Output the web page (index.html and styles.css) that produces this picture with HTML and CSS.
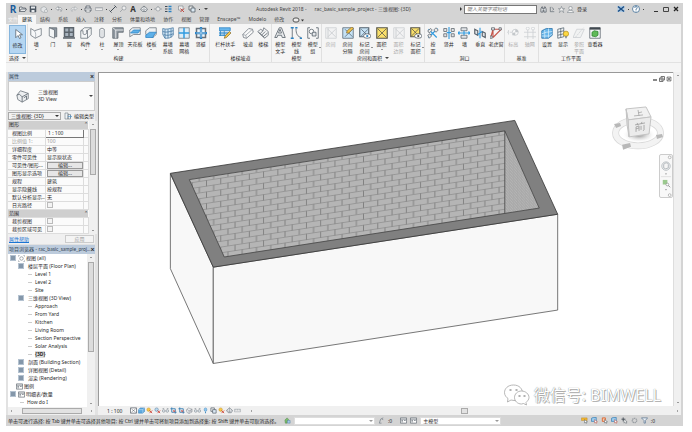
FILE: index.html
```html
<!DOCTYPE html>
<html lang="en">
<head>
<meta charset="utf-8">
<title>Autodesk Revit 2018</title>
<link rel="stylesheet" href="styles.css">
</head>
<body>
<svg class="defs" aria-hidden="true">
  <symbol id="cursor" viewBox="0 0 16 16"><path d="M5 2v11l3-3 2 4 2-1-2-4h4z" fill="#fff" stroke="#55606b"/></symbol>
  <symbol id="wall" viewBox="0 0 16 16"><path d="M1 2l5 3 9-3v9l-8 4-6-4z" fill="#f7f8f9" stroke="#687079"/><path d="M6 5c2 3 2 6 1 10" fill="none" stroke="#9aa2aa"/></symbol>
  <symbol id="door" viewBox="0 0 16 16"><path d="M3 1h10v12h-3V4L3 1z" fill="#8d969f" stroke="#5d656d"/><path d="M3 1l7 3v11l-7-3z" fill="#f3f5f6" stroke="#687079"/></symbol>
  <symbol id="window" viewBox="0 0 16 16"><path d="M2 1h12v12H2z" fill="#a9b4bf" stroke="#5d656d" stroke-width="2"/><path d="M8 1v12M2 7h12M0 14.500h16" stroke="#5d656d" stroke-width="2"/></symbol>
  <symbol id="part" viewBox="0 0 16 16"><path d="M1 5l5-4h9v9l-5 5H1z" fill="#f4f5f6" stroke="#687079"/><path d="M1 5h3v4c2 2 4 1 5-1V5l6-4M10 15V5H8" fill="none" stroke="#687079"/></symbol>
  <symbol id="column" viewBox="0 0 16 16"><path d="M5 3q3-3 6 0v10q-3 3-6 0z" fill="#f6f7f8" stroke="#687079"/><path d="M8 4v11" stroke="#b9bec3"/></symbol>
  <symbol id="roof" viewBox="0 0 16 16"><path d="M1 1h14v6H8v8H1z" fill="#8f979f" stroke="#5d656d"/><path d="M1 1l4 3v11M5 4h10" fill="none" stroke="#fff"/></symbol>
  <symbol id="ceil" viewBox="0 0 16 16"><path d="M1 13V4l4-3h10v9h-9z" fill="#eef1f3" stroke="#687079"/><path d="M2 8l4-4h9l-3 4z" fill="#5eb0e8" stroke="#2c83c4"/></symbol>
  <symbol id="floor" viewBox="0 0 16 16"><path d="M1 10V5l5-4h9v9l-5 4z" fill="#eef1f3" stroke="#687079"/><path d="M1 11l5-4h9l-4 5v2H1z" fill="#5eb0e8" stroke="#2c83c4"/></symbol>
  <symbol id="curtain" viewBox="0 0 16 16"><path d="M1 2c5 2 9 0 14-1v10c-4 4-6 4-11 4L1 10z" fill="#d5e9f7" stroke="#40739d"/><path d="M4 3v12M8 3v12M12 2v12M1 6c5 2 9 0 14-1M2 10c5 2 8 1 13-1" fill="none" stroke="#40739d"/></symbol>
  <symbol id="grid" viewBox="0 0 16 16"><path d="M1 1h14v14H1z" fill="#dcecf7" stroke="#687079"/><path d="M8 1v14M1 8h14" stroke="#319be0" stroke-width="2"/></symbol>
  <symbol id="mullion" viewBox="0 0 16 16"><path d="M2 2h12v12H2z" fill="#eff6fb" stroke="#687079" stroke-width="2"/><path d="M8 0v16M0 8h16" stroke="#2c83c4" stroke-width="3"/><path d="M8 2v12M2 8h12" stroke="#c8e2f5"/></symbol>
  <symbol id="rail" viewBox="0 0 16 16"><path d="M0 1h15v4H0z" fill="#67b6ec" stroke="#2c83c4"/><path d="M0 8h13M0 11h9" stroke="#4c9bd4" stroke-width="2"/><path d="M2 5v7M7 5v7" stroke="#2c83c4"/><path d="M7 15l1-3 6-6 2 2-6 6z" fill="#f3c64e" stroke="#8c7338"/></symbol>
  <symbol id="ramp" viewBox="0 0 16 16"><path d="M1 10L9 2l5 1 1 4-9 8-4-1z" fill="#fafafa" stroke="#687079"/><path d="M1 10l4 1 9-8M5 11l1 4" fill="none" stroke="#8f979f"/></symbol>
  <symbol id="stair" viewBox="0 0 16 16"><path d="M1 6l4-3 3 2 1-4 6 5v5l-5 4z" fill="#f0f1f2" stroke="#687079"/><path d="M4 9l4-4M6 11l5-5M8 13l6-5M2 7l8 7" stroke="#59616a"/></symbol>
  <symbol id="mtext" viewBox="0 0 16 16"><path d="M1 14L7 1h3l5 13h-4l-1-3H5l-1 3z" fill="#e8eaec" stroke="#4e5862"/><path d="M6 8l2-5 2 5z" fill="#fff" stroke="#4e5862"/></symbol>
  <symbol id="mline" viewBox="0 0 16 16"><path d="M3 1v14M8 2c0 7 2 11 7 12" fill="none" stroke="#4e5862"/><path d="M1 1h4M1 15h4M7 1h3M13 15h3" stroke="#2c83c4" stroke-width="2"/></symbol>
  <symbol id="mgroup" viewBox="0 0 16 16"><path d="M4 1H1v14h3M12 1h3v14h-3" fill="none" stroke="#4e5862"/><circle cx="6" cy="6" r="3" fill="#fff" stroke="#4e5862"/><path d="M7 7h5v5H7z" fill="#e4e7ea" stroke="#4e5862"/></symbol>
  <symbol id="room" viewBox="0 0 16 16"><path d="M1 1h14v14H1z" fill="#eef0f1" stroke="#8a9299"/><path d="M4 3l10 10M14 3L4 13M4 1v14" stroke="#7b848c"/></symbol>
  <symbol id="roomsep" viewBox="0 0 16 16"><path d="M1 1h14v14H1z" fill="#c6e2f5" stroke="#50606d"/><path d="M4 3l10 10M14 3L4 13" stroke="#50606d"/><path d="M6 8l1-3 6-5 2 2-6 6z" fill="#f3c64e" stroke="#8c7338"/></symbol>
  <symbol id="roomtag" viewBox="0 0 16 16"><path d="M1 1h12v12H1z" fill="#c6e2f5" stroke="#50606d" stroke-width="1.500"/><path d="M3 3l9 9M12 3l-9 9" stroke="#50606d"/><ellipse cx="11" cy="12" rx="5" ry="3" fill="#fff" stroke="#4e5862"/><circle cx="11" cy="12" r="1.500" fill="#2c83c4"/></symbol>
  <symbol id="area" viewBox="0 0 16 16"><path d="M1 1h14v14H1z" fill="#fae06a" stroke="#57564c" stroke-width="1.500"/><path d="M2 2l12 12M14 2L2 14" stroke="#57564c"/></symbol>
  <symbol id="areatag" viewBox="0 0 16 16"><path d="M1 1h12v12H1z" fill="#fae06a" stroke="#57564c" stroke-width="1.500"/><path d="M2 2l10 10M12 2L2 12" stroke="#57564c"/><ellipse cx="11" cy="12" rx="5" ry="3" fill="#fff" stroke="#4e5862"/><circle cx="11" cy="12" r="1.500" fill="#444"/></symbol>
  <symbol id="byface" viewBox="0 0 16 16"><path d="M2 3l11 11M2 14L14 2" stroke="#319be0" stroke-width="1.500"/><path d="M1 5l4-3 2 2-4 4zM9 4l3-3 3 3-3 3zM1 11l3-2 2 3-3 3z" fill="#e8eaec" stroke="#59616a"/></symbol>
  <symbol id="shaft" viewBox="0 0 16 16"><path d="M1 2h4v4H1zM1 9h4v4H1zM11 2h4v4h-4zM11 9h4v4h-4z" fill="#e2e5e8" stroke="#59616a"/><path d="M8 0v16M5 7.500h6" stroke="#319be0" stroke-width="1.500"/></symbol>
  <symbol id="wallop" viewBox="0 0 16 16"><path d="M4 1h8v4H4zM4 11h8v4H4z" fill="#e2e5e8" stroke="#59616a"/><path d="M0 8h16M8 5v6M2 6L0 8l2 2M14 6l2 2-2 2" fill="none" stroke="#319be0" stroke-width="1.500"/></symbol>
  <symbol id="vert" viewBox="0 0 16 16"><path d="M1 3l4 2v6L1 9zM11 6l4 2v6l-4-2z" fill="#e2e5e8" stroke="#59616a" stroke-width="1.500"/><path d="M8 1v14M5 10l6-4" stroke="#319be0" stroke-width="1.500"/></symbol>
  <symbol id="dormer" viewBox="0 0 16 16"><path d="M1 14L4 3h11L4 14M4 3v11" fill="none" stroke="#c5564b" stroke-width="1.500"/><path d="M0 12h3v3H0zM2 1h4v3H2zM12 1h3v3h-3z" fill="#e8eaec" stroke="#59616a"/></symbol>
  <symbol id="level" viewBox="0 0 16 16"><path d="M0 7h9M2 4v6" stroke="#8b949c" stroke-dasharray="3 1"/><circle cx="11" cy="7" r="4" fill="#fff" stroke="#7b848c"/><path d="M11 3v8H7q0-4 4-4h4q0-4-4-4" fill="#7b848c"/></symbol>
  <symbol id="axes" viewBox="0 0 16 16"><path d="M5 4v12M12 4v12M0 7h16M0 13h16" stroke="#8b949c"/><circle cx="5" cy="2" r="2" fill="#fff" stroke="#8b949c"/><circle cx="12" cy="2" r="2" fill="#fff" stroke="#8b949c"/></symbol>
  <symbol id="set" viewBox="0 0 16 16"><path d="M1 5l6-3h8v9l-5 4H1z" fill="#66b5ea" stroke="#276fa5"/><path d="M1 9l6-2 8-1M5 4v11M10 2v12M1 12h10l4-3" fill="none" stroke="#d7edfb"/></symbol>
  <symbol id="show" viewBox="0 0 16 16"><path d="M1 3l8-2v12l-8 2z" fill="#f4f6f7" stroke="#50606d"/><path d="M1 7l8-2M1 11l8-2M5 2v12" stroke="#50606d"/><circle cx="12" cy="9" r="3.500" fill="#fdd842" stroke="#b59320"/><path d="M11 12h2v3h-2z" fill="#7b848c"/></symbol>
  <symbol id="refp" viewBox="0 0 16 16"><path d="M5 3h10l-5 11H0z" fill="#edeff0" stroke="#8b949c"/><path d="M3 14L14 1" stroke="#8b949c" stroke-dasharray="3 1"/></symbol>
  <symbol id="viewer" viewBox="0 0 16 16"><path d="M1 1h14v14H1z" fill="#f4f6f7" stroke="#5a636b"/><path d="M1 2h14" stroke="#40484f" stroke-width="3"/><path d="M4 7l3-2 5 1v5l-3 2-5-1z" fill="#60ba58" stroke="#2f8430"/></symbol>

  <symbol id="open" viewBox="0 0 16 16"><path d="M1 13V4h5l1 2h6v2M1 13l3-5h11l-3 5z" fill="#e8eaec" stroke="#515a63" stroke-width="1.500"/></symbol>
  <symbol id="save" viewBox="0 0 16 16"><path d="M2 2h11l1 1v11H2z" fill="#4e5965" stroke="#414b55"/><path d="M4 3h8v4H4zM5 10h6v4H5z" fill="#e6e9ec"/></symbol>
  <symbol id="sync" viewBox="0 0 16 16"><path d="M2 6l6-3 5 3v6l-5 3-6-3z" fill="#e3e5e7" stroke="#8d9499"/><circle cx="12" cy="12" r="3" fill="#eee" stroke="#8d9499"/></symbol>
  <symbol id="undo" viewBox="0 0 16 16"><path d="M6 3L2 7l4 4V8c4-1 6 1 6 5 4-5 1-9-6-8z" fill="#f5f6f7" stroke="#6b737b"/></symbol>
  <symbol id="redo" viewBox="0 0 16 16"><path d="M10 3l4 4-4 4V8c-4-1-6 1-6 5C0 8 3 4 10 5z" fill="#e8e9ea" stroke="#999fa4"/></symbol>
  <symbol id="print" viewBox="0 0 16 16"><path d="M4 6V2h8v4M2 6h12v6H2z" fill="#eceef0" stroke="#515a63" stroke-width="1.500"/><path d="M4 10h8v4H4z" fill="#fff" stroke="#515a63"/></symbol>
  <symbol id="measure" viewBox="0 0 16 16"><path d="M1 5h14v6H1z" fill="#eee" stroke="#848b92"/><path d="M4 5v3M8 5v3M12 5v3" stroke="#848b92"/></symbol>
  <symbol id="dim" viewBox="0 0 16 16"><path d="M2 14L14 2M1 11l4 4M11 1l4 4" stroke="#444d56" stroke-width="2"/></symbol>
  <symbol id="tag" viewBox="0 0 16 16"><circle cx="10" cy="6" r="4" fill="#eee" stroke="#777f87"/><path d="M7 9l-5 5" stroke="#777f87"/></symbol>
  <symbol id="home" viewBox="0 0 16 16"><path d="M1 8l7-6 7 6-3 5H5z" fill="#eef0f1" stroke="#68717a" stroke-width="1.500"/><path d="M8 2v9M3 8l5 3 5-3" fill="none" stroke="#68717a"/></symbol>
  <symbol id="sect" viewBox="0 0 16 16"><circle cx="8" cy="8" r="4" fill="#eee" stroke="#777f87"/><path d="M0 8h4M12 8h4M8 2v2" stroke="#777f87"/></symbol>
  <symbol id="thin" viewBox="0 0 16 16"><path d="M2 3h5M2 8h5M2 13h5" stroke="#444d56" stroke-width="2"/><path d="M9 3h6M9 8h6M9 13h6" stroke="#2c83c4" stroke-width="3"/></symbol>
  <symbol id="closew" viewBox="0 0 16 16"><path d="M3 2h9v8H3z" fill="#eee" stroke="#666e76"/><path d="M7 7l7 7M14 7l-7 7" stroke="#c14a42" stroke-width="2"/></symbol>
  <symbol id="switch" viewBox="0 0 16 16"><path d="M2 2h8v8H2z" fill="#eee" stroke="#4e5862" stroke-width="1.500"/><path d="M6 6h8v8H6z" fill="#dce9f3" stroke="#4e5862" stroke-width="1.500"/></symbol>
  <symbol id="bino" viewBox="0 0 16 16"><path d="M2 7l2-5h2v4h4V2h2l2 5v7H9V9H7v5H2z" fill="#dfe2e5" stroke="#444d56" stroke-width="1.500"/></symbol>
  <symbol id="comm" viewBox="0 0 16 16"><path d="M3 2v11h9M6 3l5 4-3 3" fill="none" stroke="#56606a" stroke-width="1.500"/></symbol>
  <symbol id="star" viewBox="0 0 16 16"><path d="M8 1l2 5h5l-4 3 2 6-5-4-5 4 2-6-4-3h5z" fill="#f4f4f4" stroke="#56606a"/></symbol>
  <symbol id="user" viewBox="0 0 16 16"><circle cx="8" cy="5" r="4" fill="#f4f4f4" stroke="#56606a"/><path d="M1 15q1-6 7-5 6-1 7 5z" fill="#f4f4f4" stroke="#56606a"/></symbol>
  <symbol id="xchg" viewBox="0 0 16 16"><path d="M1 2h14v12H1z" fill="#aecbe5"/><path d="M2 3l12 10M14 3L2 13" stroke="#1d4f85" stroke-width="3"/></symbol>
  <symbol id="help" viewBox="0 0 16 16"><circle cx="8" cy="8" r="7" fill="#fff" stroke="#35658f" stroke-width="1.500"/><path d="M5.500 6q0-3 2.500-3t2.500 2.500Q10 8 8 8v2M8 11v2" fill="none" stroke="#35658f" stroke-width="1.500"/></symbol>
  <symbol id="house" viewBox="0 0 16 16"><path d="M1 7l4-5 9 3v6l-7 4-5-3z" fill="#eceef0" stroke="#777f87"/><path d="M1 7l3-1 3 3 7-4M7 9v6M9 10l3-2v4" fill="none" stroke="#646d76"/></symbol>
  <symbol id="edittype" viewBox="0 0 16 16"><path d="M2 2h6v12H2zM8 5h5v9H8z" fill="#edf2f6" stroke="#56606a"/><path d="M8 9h7M12 6l3 3-3 3" fill="none" stroke="#2c83c4"/></symbol>
  <symbol id="views" viewBox="0 0 16 16"><path d="M4 1H1v3M12 1h3v3M4 15H1v-3M12 15h3v-3" fill="none" stroke="#6a737b"/><circle cx="8" cy="8" r="4" fill="#fff" stroke="#444d56"/></symbol>
  <symbol id="sheet" viewBox="0 0 16 16"><path d="M1 2h14v12H1z" fill="#fff" stroke="#5a636c" stroke-width="1.500"/><path d="M1 5h14M3 8h4M3 11h4M9 8h4" stroke="#5a636c" stroke-width="1.500"/></symbol>
  <symbol id="scalebox" viewBox="0 0 16 16"><path d="M1 2h14v12H1z" fill="#fff" stroke="#444d56" stroke-width="1.500"/><path d="M3 4l10 8M13 4L3 12" stroke="#444d56"/></symbol>
  <symbol id="bluebox" viewBox="0 0 16 16"><path d="M1 6l4-4h10v8l-4 4H1z" fill="#5ea9df" stroke="#2b75b0"/><path d="M1 6h10l4-4M11 6v8" fill="none" stroke="#dceefa"/></symbol>
  <symbol id="sun" viewBox="0 0 16 16"><circle cx="6" cy="6" r="4" fill="#f9c94a" stroke="#bd8b22"/><path d="M8 8l6 6M14 8l-6 6" stroke="#cf4338" stroke-width="2"/></symbol>
  <symbol id="shadow" viewBox="0 0 16 16"><circle cx="6" cy="6" r="4" fill="#b7d8ef" stroke="#426d90"/><path d="M8 8l6 6M14 8l-6 6" stroke="#cf4338" stroke-width="2"/></symbol>
  <symbol id="crop" viewBox="0 0 16 16"><path d="M4 1v11h11M1 4h11v11" fill="none" stroke="#357bb2" stroke-width="2"/><path d="M7 7l5 5M12 7l-5 5" stroke="#cf4338" stroke-width="1.500"/></symbol>
  <symbol id="glasses" viewBox="0 0 16 16"><path d="M1 4l4-1M11 3l4 1" stroke="#56606a"/><circle cx="4" cy="9" r="3" fill="#e6edf2" stroke="#56606a"/><circle cx="12" cy="9" r="3" fill="#e6edf2" stroke="#56606a"/></symbol>
  <symbol id="bulb" viewBox="0 0 16 16"><ellipse cx="8" cy="6" rx="3" ry="4" fill="#8ec8f2" stroke="#337fb8"/><path d="M7 11h2v3H7z" fill="#337fb8"/></symbol>
  <symbol id="green" viewBox="0 0 16 16"><path d="M2 7l5-5 4 4-4 3v5H3z" fill="#7bbd6e" stroke="#447b45"/><path d="M8 8h6v6H8z" fill="#a2c9e5" stroke="#43779f"/></symbol>
  <symbol id="pick" viewBox="0 0 16 16"><path d="M1 2h13v6H1z" fill="#f3b62e" stroke="#b5852a"/><path d="M8 6v8l2-2 2 3 1-1-1-3h3z" fill="#fff" stroke="#444d56"/></symbol>
  <symbol id="pickred" viewBox="0 0 16 16"><path d="M3 2h7v8H3z" fill="#fac9a7" stroke="#d9622f" stroke-width="2"/><path d="M8 6v8l2-2 2 3 1-1-1-3h3z" fill="#fff" stroke="#444d56"/></symbol>
  <symbol id="pickblue" viewBox="0 0 16 16"><path d="M1 3l4-2h7v9H1z" fill="#9acbed" stroke="#2b75b0" stroke-width="1.500"/><path d="M8 6v8l2-2 2 3 1-1-1-3h3z" fill="#fff" stroke="#b4453a"/></symbol>
  <symbol id="pickdrag" viewBox="0 0 16 16"><path d="M5 1v9M1 5h9" stroke="#444d56" stroke-width="2"/><path d="M7 5v9l2-2 2 3 2-1-2-3h3z" fill="#fff" stroke="#444d56"/></symbol>
  <symbol id="gear" viewBox="0 0 16 16"><circle cx="8" cy="8" r="5" fill="#d4d4d4" stroke="#9a9fa4" stroke-width="3" stroke-dasharray="3 1"/></symbol>
  <symbol id="filter" viewBox="0 0 16 16"><path d="M1 2h14L10 8v6H7V8z" fill="#edf2f7" stroke="#4d6b89" stroke-width="1.500"/></symbol>
  <symbol id="editable" viewBox="0 0 16 16"><path d="M3 14L6 5l6-3M3 14h5M9 4l3 3" fill="none" stroke="#848b92" stroke-width="2"/></symbol>
</svg>

<main class="app">
  <header class="titlebar">
    <div class="qat">
      <button class="ico logo" aria-label="Revit">R</button>
      <button class="ico" aria-label="打开"><svg><use href="#open"/></svg></button>
      <button class="ico" aria-label="保存"><svg><use href="#save"/></svg></button>
      <button class="ico drop" aria-label="同步"><svg><use href="#sync"/></svg></button>
      <button class="ico drop" aria-label="放弃"><svg><use href="#undo"/></svg></button>
      <button class="ico drop" aria-label="重做"><svg><use href="#redo"/></svg></button>
      <button class="ico" aria-label="打印"><svg><use href="#print"/></svg></button>
      <button class="ico drop" aria-label="测量"><svg><use href="#measure"/></svg></button>
      <button class="ico" aria-label="尺寸标注"><svg><use href="#dim"/></svg></button>
      <button class="ico" aria-label="标记"><svg><use href="#tag"/></svg></button>
      <button class="ico letter" aria-label="文字">A</button>
      <button class="ico drop" aria-label="三维视图"><svg><use href="#home"/></svg></button>
      <button class="ico" aria-label="剖面"><svg><use href="#sect"/></svg></button>
      <button class="ico" aria-label="细线"><svg><use href="#thin"/></svg></button>
      <button class="ico gap" aria-label="关闭隐藏窗口"><svg><use href="#closew"/></svg></button>
      <button class="ico drop" aria-label="切换窗口"><svg><use href="#switch"/></svg></button>
      <button class="ico caret" aria-label="自定义"></button>
    </div>
    <h1 class="doc-title"><span>Autodesk Revit 2018 -</span><span>rac_basic_sample_project - 三维视图: {3D}</span></h1>
    <div class="info">
      <span class="tri-right"></span>
      <input class="search" type="text" aria-label="搜索" placeholder="键入关键字或短语">
      <button class="ico" aria-label="搜索"><svg><use href="#bino"/></svg></button>
      <button class="ico" aria-label="通讯中心"><svg><use href="#comm"/></svg></button>
      <button class="ico" aria-label="收藏夹"><svg><use href="#star"/></svg></button>
      <button class="ico" aria-label="用户"><svg><use href="#user"/></svg></button>
      <button class="login">登录</button>
    </div>
    <div class="win">
      <button class="ico drop" aria-label="Exchange"><svg><use href="#xchg"/></svg></button>
      <button class="ico drop" aria-label="帮助"><svg><use href="#help"/></svg></button>
      <button class="wbtn first" aria-label="最小化"><svg viewBox="0 0 8 8"><path d="M2 6.500h4" stroke="#333"/></svg></button>
      <button class="wbtn" aria-label="最大化"><svg viewBox="0 0 8 8"><path d="M1.500 2.500h5v4h-5z" fill="none" stroke="#444"/></svg></button>
      <button class="wbtn" aria-label="关闭"><svg viewBox="0 0 8 8"><path d="M2 2l4 4M6 2L2 6" stroke="#222" stroke-width="1.300"/></svg></button>
    </div>
  </header>

  <nav class="tabs">
    <button class="tab file">文件</button><button class="tab active">建筑</button><button class="tab">结构</button><button class="tab">系统</button><button class="tab">插入</button><button class="tab">注释</button><button class="tab">分析</button><button class="tab">体量和场地</button><button class="tab">协作</button><button class="tab">视图</button><button class="tab">管理</button><button class="tab">Enscape™</button><button class="tab">Modelo</button><button class="tab">修改</button><button class="tab more" aria-label="显示选项"><svg viewBox="0 0 12 6"><rect x="1" y="1" width="6" height="4" rx="2" fill="#eee" stroke="#555"/><path d="M9 2.500h3l-1.500 2z" fill="#333"/></svg></button>
  </nav>

  <section class="ribbon">
    <div class="panel p-select"><div class="tools"><button class="tool on"><svg><use href="#cursor"/></svg><span>修改</span></button></div><div class="cap menu">选择</div></div>
    <div class="panel p-build"><div class="tools">
      <button class="tool more"><svg><use href="#wall"/></svg><span>墙</span></button>
      <button class="tool"><svg><use href="#door"/></svg><span>门</span></button>
      <button class="tool"><svg><use href="#window"/></svg><span>窗</span></button>
      <button class="tool more"><svg><use href="#part"/></svg><span>构件</span></button>
      <button class="tool more"><svg><use href="#column"/></svg><span>柱</span></button>
      <button class="tool more"><svg><use href="#roof"/></svg><span>屋顶</span></button>
      <button class="tool"><svg><use href="#ceil"/></svg><span>天花板</span></button>
      <button class="tool more"><svg><use href="#floor"/></svg><span>楼板</span></button>
      <button class="tool"><svg><use href="#curtain"/></svg><span>幕墙<br>系统</span></button>
      <button class="tool"><svg><use href="#grid"/></svg><span>幕墙<br>网格</span></button>
      <button class="tool"><svg><use href="#mullion"/></svg><span>竖梃</span></button>
    </div><div class="cap">构建</div></div>
    <div class="panel p-stair"><div class="tools">
      <button class="tool wide more"><svg><use href="#rail"/></svg><span>栏杆扶手</span></button>
      <button class="tool"><svg><use href="#ramp"/></svg><span>坡道</span></button>
      <button class="tool"><svg><use href="#stair"/></svg><span>楼梯</span></button>
    </div><div class="cap">楼梯坡道</div></div>
    <div class="panel p-model"><div class="tools">
      <button class="tool"><svg><use href="#mtext"/></svg><span>模型<br>文字</span></button>
      <button class="tool"><svg><use href="#mline"/></svg><span>模型<br>线</span></button>
      <button class="tool side"><svg><use href="#mgroup"/></svg><span>模型<br>组</span></button>
    </div><div class="cap">模型</div></div>
    <div class="panel p-room"><div class="tools">
      <button class="tool" disabled><svg><use href="#room"/></svg><span>房间</span></button>
      <button class="tool"><svg><use href="#roomsep"/></svg><span>房间<br>分隔</span></button>
      <button class="tool side"><svg><use href="#roomtag"/></svg><span>标记<br>房间</span></button>
      <button class="tool more"><svg><use href="#area"/></svg><span>面积</span></button>
      <button class="tool" disabled><svg><use href="#room"/></svg><span>面积<br>边界</span></button>
      <button class="tool side"><svg><use href="#areatag"/></svg><span>标记<br>面积</span></button>
    </div><div class="cap menu">房间和面积</div></div>
    <div class="panel p-open"><div class="tools">
      <button class="tool"><svg><use href="#byface"/></svg><span>按<br>面</span></button>
      <button class="tool"><svg><use href="#shaft"/></svg><span>竖井</span></button>
      <button class="tool"><svg><use href="#wallop"/></svg><span>墙</span></button>
      <button class="tool"><svg><use href="#vert"/></svg><span>垂直</span></button>
      <button class="tool"><svg><use href="#dormer"/></svg><span>老虎窗</span></button>
    </div><div class="cap">洞口</div></div>
    <div class="panel p-datum"><div class="tools">
      <button class="tool" disabled><svg><use href="#level"/></svg><span>标高</span></button>
      <button class="tool" disabled><svg><use href="#axes"/></svg><span>轴网</span></button>
    </div><div class="cap">基准</div></div>
    <div class="panel p-plane"><div class="tools">
      <button class="tool"><svg><use href="#set"/></svg><span>设置</span></button>
      <button class="tool"><svg><use href="#show"/></svg><span>显示</span></button>
      <button class="tool" disabled><svg><use href="#refp"/></svg><span>参照<br>平面</span></button>
      <button class="tool"><svg><use href="#viewer"/></svg><span>查看器</span></button>
    </div><div class="cap">工作平面</div></div>
  </section>
  <div class="options"></div>

  <div class="work">
    <aside class="side-col">
      <section class="props">
        <h2 class="ptitle">属性<button class="px" aria-label="关闭属性">×</button></h2>
        <div class="type"><svg><use href="#house"/></svg><p>三维视图<br>3D View</p><span class="tri-down"></span></div>
        <div class="inst">
          <label class="pick"><select aria-label="实例"><option>三维视图: {3D}</option></select></label>
          <button class="edit-type"><svg><use href="#edittype"/></svg>编辑类型</button>
        </div>
        <div class="scrollable">
          <table class="ptable">
            <tr class="group"><th colspan="2">图形</th><td class="fold">⌃</td></tr>
            <tr><th>视图比例</th><td class="boxed">1 : 100</td><td></td></tr>
            <tr class="dim"><th>比例值 1:</th><td>100</td><td></td></tr>
            <tr><th>详细程度</th><td>中等</td><td></td></tr>
            <tr><th>零件可见性</th><td>显示原状态</td><td></td></tr>
            <tr><th>可见性/图形...</th><td><button class="cellbtn">编辑...</button></td><td></td></tr>
            <tr><th>图形显示选项</th><td><button class="cellbtn">编辑...</button></td><td></td></tr>
            <tr><th>规程</th><td>建筑</td><td></td></tr>
            <tr><th>显示隐藏线</th><td>按规程</td><td></td></tr>
            <tr><th>默认分析显示...</th><td>无</td><td></td></tr>
            <tr><th>日光路径</th><td><input type="checkbox" aria-label="日光路径"></td><td></td></tr>
            <tr class="group"><th colspan="2">范围</th><td class="fold">⌃</td></tr>
            <tr><th>裁剪视图</th><td><input type="checkbox" aria-label="裁剪视图"></td><td></td></tr>
            <tr><th>裁剪区域可见</th><td><input type="checkbox" aria-label="裁剪区域可见"></td><td></td></tr>
          </table>
          <div class="vbar"><i class="up"></i><b class="t-props"></b><i class="down"></i></div>
        </div>
        <div class="pfoot"><a href="#help">属性帮助</a><button class="apply" disabled>应用</button></div>
      </section>
      <section class="browser">
        <h2 class="ptitle"><span>项目浏览器 - rac_basic_sample_proj...</span><button class="px" aria-label="关闭项目浏览器">×</button></h2>
        <div class="scrollable">
          <ul class="tree">
            <li class="l0 minus"><svg><use href="#views"/></svg>视图 (all)</li>
            <li class="l1 minus">楼层平面 (Floor Plan)</li>
            <li class="l2">Level 1</li>
            <li class="l2">Level 2</li>
            <li class="l2">Site</li>
            <li class="l1 minus">三维视图 (3D View)</li>
            <li class="l2">Approach</li>
            <li class="l2">From Yard</li>
            <li class="l2">Kitchen</li>
            <li class="l2">Living Room</li>
            <li class="l2">Section Perspective</li>
            <li class="l2">Solar Analysis</li>
            <li class="l2 sel"><strong>{3D}</strong></li>
            <li class="l1 plus">剖面 (Building Section)</li>
            <li class="l1 plus">详图视图 (Detail)</li>
            <li class="l1 plus">渲染 (Rendering)</li>
            <li class="l0"><svg><use href="#sheet"/></svg>图例</li>
            <li class="l0 minus"><svg><use href="#sheet"/></svg>明细表/数量</li>
            <li class="l2 near">How do I</li>
          </ul>
          <div class="vbar"><i class="up"></i><b class="t-tree"></b><i class="down"></i></div>
        </div>
        <div class="hbar"><i class="left"></i><b></b><i class="right"></i></div>
      </section>
    </aside>

    <section class="view">
      <div class="view-main">
        <div class="canvas">
          <svg class="model" viewBox="98 72 575 334" preserveAspectRatio="xMinYMin meet" role="img" aria-label="三维视图">
            <defs>
              <pattern id="brick" width="14.300" height="11.500" patternUnits="userSpaceOnUse" patternTransform="translate(219.500 188.500) skewY(-8.730)">
                <path d="M0 .5h14.300M0 6.250h14.300" stroke="#8a8a8a" stroke-width=".7"/>
                <path d="M.5 .5v5.750M7.650 6.250v5.250" stroke="#6c6c6c" stroke-width=".7"/>
              </pattern>
              <pattern id="hatch" width="4" height="3" patternUnits="userSpaceOnUse" patternTransform="skewY(50)">
                <path d="M0 1h4" stroke="#999" stroke-width=".8"/><path d="M1 1v2" stroke="#a0a0a0" stroke-width=".5"/>
              </pattern>
              <radialGradient id="soft"><stop offset="0" stop-color="#888"/><stop offset="1" stop-color="#fff" stop-opacity="0"/></radialGradient>
            </defs>
            <path d="M169.500 173L212.500 266.500V363L169.500 268z" fill="#f8f8f8" stroke="#555" stroke-width=".8"/>
            <path d="M212.500 266.500L557.500 213.500V309.500L212.500 363z" fill="#f8f8f8" stroke="#555" stroke-width=".8"/>
            <path d="M169.500 172.500L514.500 119.500L557.500 213.500L212.500 266.500z" fill="#808080" stroke="#333" stroke-width=".8"/>
            <path d="M188.500 178.800L504.500 130L539 207.300L223.500 256.300z" fill="#b5b5b5"/>
            <path d="M188.500 178.800L504.500 130V212.500L223.500 256.300z" fill="url(#brick)"/>
            <path d="M504.500 130L539 207.300L504.500 212.500z" fill="url(#hatch)"/>
            <path d="M188.500 178.800L504.500 130L539 207.300L223.500 256.300zM504.500 130v82.500" fill="none" stroke="#444" stroke-width=".8"/>
            <ellipse cx="638" cy="132" rx="22.500" ry="13" fill="none" stroke="#d8d8d8" stroke-width="7"/>
            <ellipse cx="638" cy="132" rx="22.500" ry="13" fill="none" stroke="#f3f3f3" stroke-width="5.500"/>
            <path d="M614 123l6-1 1 3-5 2zM622 144l8-2 1 4-8 3zM656 134l6-1 1 3-6 2z" fill="#b8b8b8"/>
            <ellipse cx="639" cy="134" rx="17" ry="8" fill="url(#soft)"/>
            <path d="M626 108l20-2 5 10-23 3z" fill="#f1f1f1" stroke="#c4c4c4"/>
            <path d="M628 119l23-3-2 17-20 3z" fill="#ebebeb" stroke="#c4c4c4"/>
            <path d="M626 108l2 11 1 17-2-12z" fill="#ddd" stroke="#c4c4c4"/>
            <path d="M638 109l1 6M638 112l4-1M634 115l9-1" stroke="#a6a6a6" stroke-width=".8" fill="none"/>
            <path d="M635 124l10-2M637 122l1 2M642 121l-1 2M636 126v5M636 126l3-1v5M636 128l3-1M641 125v4M644 124v5l-1 1" stroke="#999" stroke-width=".8" fill="none"/>
          </svg>
          <div class="mdi">
            <button aria-label="最小化视图"><svg viewBox="0 0 6 6"><path d="M1 4h4" stroke="#888" stroke-width="2"/></svg></button>
            <button aria-label="还原视图"><svg viewBox="0 0 6 6"><path d="M2 .5h3.500V4H2zM.5 2H4v3.500H.5z" fill="#eee" stroke="#777"/></svg></button>
            <button aria-label="关闭视图"><svg viewBox="0 0 6 6"><path d="M1 1h4v4H1z" fill="#ccc" stroke="#999"/><path d="M1 1l4 4M5 1L1 5" stroke="#888"/></svg></button>
          </div>
          <div class="navbar">
            <svg viewBox="0 0 13 46">
              <circle cx="10.500" cy="2.500" r="1.500" fill="#fff" stroke="#999" stroke-width=".7"/>
              <circle cx="6.500" cy="12" r="4.500" fill="#fff" stroke="#aeb4b9"/><path d="M4 10q4-3 5 0v4q-3 2-5 0z" fill="#f5f5f5" stroke="#aeb4b9"/>
              <path d="M5.500 20h2l-1 1.500zM5.500 37h2l-1 1.500z" fill="#777"/><path d="M1 23.500h11" stroke="#ddd"/>
              <path d="M3 27h5v5H3z" fill="#9bc98e"/><circle cx="8" cy="32" r="1.500" fill="#fff" stroke="#888" stroke-width=".7"/><path d="M9 33l2 2" stroke="#888"/>
              <circle cx="10.500" cy="43.500" r="1.500" fill="#fff" stroke="#999" stroke-width=".7"/>
            </svg>
          </div>
          <div class="mark">
            <svg viewBox="0 0 26 22"><g fill="#fff" stroke="#999" stroke-width=".7"><path d="M10 1C4 1 1 5 1 8.500c0 3 2 5 3.500 6L4 18l3.500-2 3 .5C16 17 19 13 19 9S16 1 10 1z"/><path d="M18 7c-4 0-7 3-7 6.500S14 20 18 20l2-.5 3 1.500-.5-2.500C24 17 25.500 15.500 25.500 13.500 25.500 10 22 7 18 7z"/></g><path d="M6 6h2M12 6h2M15 12h2M20 12h2" stroke="#999" stroke-width="1.500"/></svg>
            <span>微信号: BIMWELL</span>
          </div>
        </div>
        <div class="vbar rim"><i class="up"></i><b class="t-none"></b><i class="down"></i></div>
      </div>
      <div class="viewbar">
        <span class="scale">1 : 100</span>
        <button class="vi" aria-label="详细程度"><svg><use href="#scalebox"/></svg></button>
        <button class="vi" aria-label="视觉样式"><svg><use href="#bluebox"/></svg></button>
        <button class="vi" aria-label="日光"><svg><use href="#sun"/></svg></button>
        <button class="vi" aria-label="阴影"><svg><use href="#shadow"/></svg></button>
        <button class="vi" aria-label="渲染"><svg><use href="#glasses"/></svg></button>
        <button class="vi" aria-label="裁剪"><svg><use href="#crop"/></svg></button>
        <button class="vi" aria-label="显示裁剪"><svg><use href="#crop"/></svg></button>
        <button class="vi" aria-label="锁定"><svg><use href="#house"/></svg></button>
        <button class="vi" aria-label="临时隐藏"><svg><use href="#glasses"/></svg></button>
        <button class="vi" aria-label="显示隐藏图元"><svg><use href="#bulb"/></svg></button>
        <button class="vi" aria-label="临时视图属性"><svg><use href="#switch"/></svg></button>
        <button class="vi" aria-label="分析模型"><svg><use href="#sun"/></svg></button>
        <button class="vi" aria-label="位移集"><svg><use href="#home"/></svg></button>
        <button class="vi" aria-label="约束"><svg><use href="#measure"/></svg></button>
        <div class="hbar flat"><i class="left"></i><b></b><i class="right"></i></div>
      </div>
    </section>
  </div>

  <footer class="status">
    <p>单击可进行选择; 按 Tab 键并单击可选择其他项目; 按 Ctrl 键并单击可将新项目添加到选择集; 按 Shift 键并单击可取消选择。</p>
    <svg><use href="#green"/></svg>
    <label class="pick"><select aria-label="工作集"><option> </option></select></label>
    <svg><use href="#editable"/></svg><span>:0</span>
    <svg class="gap"><use href="#sheet"/></svg><svg><use href="#sheet"/></svg>
    <label class="pick"><select aria-label="设计选项"><option>主模型</option></select></label>
    <div class="filters">
      <button class="vi" aria-label="选择链接"><svg><use href="#pick"/></svg></button>
      <button class="vi" aria-label="选择基线图元"><svg><use href="#pickblue"/></svg></button>
      <button class="vi" aria-label="选择锁定图元"><svg><use href="#pickred"/></svg></button>
      <button class="vi" aria-label="按面选择"><svg><use href="#pickblue"/></svg></button>
      <button class="vi" aria-label="拖曳图元"><svg><use href="#pickdrag"/></svg></button>
      <button class="vi" aria-label="后台进程"><svg><use href="#gear"/></svg></button>
      <button class="vi" aria-label="过滤器"><svg><use href="#filter"/></svg></button>
      <span>:0</span>
    </div>
  </footer>
</main>
</body>
</html>
```
FILE: styles.css
```css
* { box-sizing: border-box; }

body {
  margin: 0;
  padding: 3px 9px 6px 6px;
  min-height: 100vh;
  display: flex;
  background: #fff;
  color: #2a2a2a;
  font: 5px/8px "Noto Sans", "Noto Sans CJK SC", sans-serif;
}

button, input, select {
  margin: 0;
  padding: 0;
  border: 0;
  background: none;
  color: inherit;
  font: inherit;
}

svg { display: block; flex: none; }
h1, h2, p, ul { margin: 0; padding: 0; font: inherit; list-style: none; }
.defs { position: absolute; width: 0; height: 0; }

.app {
  flex: 1;
  min-width: 0;
  display: flex;
  flex-direction: column;
  background: #d4d4d4;
}

/* Title bar */
.titlebar { display: flex; align-items: center; height: 12px; padding: 0 2px; }
.qat, .info, .win { display: flex; align-items: center; }
.ico { width: 10px; height: 10px; display: flex; align-items: center; justify-content: center; }
.ico svg { width: 8px; height: 8px; }
.ico.drop { width: 15px; justify-content: flex-start; padding-left: 2px; }
.ico.drop::after { content: ""; width: 1px; height: 1px; margin-left: 3px; background: #444; }
.ico.logo { color: #1c5d9c; font-size: 10px; font-weight: 700; }
.ico.letter { color: #333; font-size: 8px; font-weight: 700; }
.ico.gap { margin-left: 3px; }
.ico.caret::after, .tri-down, .cap.menu::after, .tool.more::after {
  content: "";
  border: 2px solid transparent;
  border-top-color: #444;
  border-bottom: 0;
}
.tri-right { border: 2px solid transparent; border-left-color: #333; border-right: 0; }
.doc-title { flex: 1; display: flex; justify-content: center; gap: 8px; padding-right: 4px; white-space: nowrap; color: #444; }
.search { width: 73px; height: 9px; margin: 0 2px; padding: 0 2px; border: 1px solid #777; background: #fff; font-style: italic; }
.search::placeholder { color: #777; opacity: 1; }
.info .ico { width: 9px; }
.info .ico svg { width: 7px; height: 7px; }
.login { padding-left: 2px; }
.win { margin-left: 28px; }
.wbtn { width: 10px; height: 8px; }
.wbtn.first { margin-left: 6px; }
.wbtn svg { width: 8px; height: 8px; margin: auto; }

/* Ribbon tabs */
.tabs { display: flex; height: 9px; }
.tab { padding: 0 4px; line-height: 9px; white-space: nowrap; color: #444; }
.tab.file { color: #f4f4f4; padding: 0 0 0 2px; }
.tab.active { background: #f6f6f6; color: #111; }
.tab.more svg { width: 12px; height: 6px; }

/* Ribbon */
.ribbon { display: flex; height: 39px; margin-right: 2px; padding-left: 2px; background: #f5f5f5; border-bottom: 1px solid #e2e2e2; }
.panel { display: flex; flex-direction: column; border-right: 1px solid #e0e0e0; }
.tools { flex: 1; min-height: 0; display: flex; }
.tool { flex: 1 1 0; min-width: 0; display: flex; flex-direction: column; align-items: center; padding-top: 3px; line-height: 7px; white-space: nowrap; }
.tool.wide { flex: 2 1 0; }
.tool svg { width: 12px; height: 12px; margin-bottom: 2px; }
.tool.more::after { margin-top: 1px; border-width: 1px; border-bottom: 0; }
.tool:disabled { opacity: .4; }
.tool.side { position: relative; }
.tool.side::after { content: ""; position: absolute; right: 0; bottom: 5px; border: 1px solid transparent; border-top-color: #333; }
.tool.on { margin: 1px 1px 0; padding-top: 2px; background: #b5d6f2; border: 1px solid #85b5dd; }
.cap { flex: none; display: flex; align-items: center; justify-content: center; gap: 3px; height: 8px; line-height: 8px; }
.p-select { width: 20px; }
.p-build { width: 182px; }
.p-stair { width: 62px; }
.p-model { width: 50px; }
.p-room { width: 103px; }
.p-open { width: 80px; }
.p-datum { width: 34px; }
.p-plane { width: 64px; border-right: 0; }
.options { height: 9px; margin-right: 2px; background: #f5f5f5; }

/* Work area */
.work { flex: 1; min-height: 0; display: flex; margin-right: 2px; background: #f0f0f0; }
.side-col { width: 92px; padding: 0 3px 0 2px; display: flex; flex-direction: column; background: #e2e2e2; }
.props { height: 172px; display: flex; flex-direction: column; background: #f0f0f0; }
.ptitle { display: flex; justify-content: space-between; height: 9px; padding: 0 1px; font-family: Lato, "Noto Sans CJK SC", sans-serif; line-height: 9px; white-space: nowrap; background: #bccbdc; color: #345; }
.px { font-size: 7px; font-weight: 700; color: #222; }
.type { display: flex; align-items: center; gap: 8px; height: 30px; padding: 0 1px 0 7px; background: #fbfbfb; border: 1px solid #ccc; }
.type svg { width: 14px; height: 14px; }
.type p { flex: 1; line-height: 7px; }
.inst { display: flex; align-items: center; height: 10px; gap: 3px; }
.pick { position: relative; display: flex; }
.pick select { appearance: none; width: 53px; height: 8px; padding: 0 2px; border: 1px solid #aaa; background: #f2f2f2; line-height: 6px; }
.pick::after { content: ""; position: absolute; right: 2px; top: 3px; border: 2px solid transparent; border-top-color: #333; border-bottom: 0; }
.edit-type { display: flex; align-items: center; gap: 2px; white-space: nowrap; }
.edit-type svg { width: 8px; height: 8px; }
.scrollable { flex: 1; min-height: 0; display: flex; background: #fff; }

.ptable { flex: 1; table-layout: fixed; border-collapse: collapse; width: 80px; background: #fbfbfb; }
.ptable th, .ptable td { height: 8px; padding: 0 0 0 1px; line-height: 7px; font-weight: 400; text-align: left; white-space: nowrap; overflow: hidden; border-bottom: 1px solid #ddd; border-right: 1px solid #ddd; }
.ptable th { width: 38px; padding-left: 4px; }
.ptable td:last-child { width: 5px; }
.ptable .group th, .ptable .group td { padding-left: 1px; background: #cfcfcf; border-right: 0; }
.ptable .group th { width: 75px; }
.ptable .dim th, .ptable .dim td { color: #999; }
.ptable .boxed { border: 1px solid #777; padding-left: 2px; }
.cellbtn { display: block; width: 36px; height: 7px; line-height: 5px; border: 1px solid #999; background: #e6e6e6; }
input[type="checkbox"] { appearance: none; display: block; width: 6px; height: 6px; border: 1px solid #bbb; background: #f4f4f4; }

.vbar { width: 8px; flex: none; display: flex; flex-direction: column; align-items: center; background: #f0f0f0; }
.vbar i, .hbar i { display: block; border: 1px solid transparent; }
.vbar .up { border-bottom-color: #444; margin: 2px 0 4px; }
.vbar .down { border-top-color: #444; margin: auto 0 2px; }
.vbar b { width: 6px; border: 1px solid #aaa; background: #dcdcdc; }
.t-props { height: 46px; }
.t-tree { height: 90px; }
.vbar .t-none { display: none; }
.rim { border-left: 1px solid #ddd; }
.pfoot { display: flex; align-items: center; justify-content: space-between; height: 10px; padding: 0 1px; }
.pfoot a { color: #1a74d2; }
.apply { width: 29px; height: 8px; line-height: 6px; border: 1px solid #ccc; color: #999; background: #f4f4f4; }

.browser { flex: 1; margin-top: 1px; display: flex; flex-direction: column; }
.tree { flex: 1; min-width: 0; overflow: hidden; }
.tree li { display: flex; align-items: center; height: 8px; white-space: nowrap; }
.tree li::before { content: ""; flex: none; width: 4px; height: 4px; margin-right: 4px; }
.tree .plus::before, .tree .minus::before { border: 1px solid #b4c2d0; background: #8497aa; }
.tree svg { width: 7px; height: 7px; margin-right: 1px; }
.tree .l0 { padding-left: 2px; }
.tree .l0::before { margin-right: 2px; }
.tree .l1 { padding-left: 10px; }
.tree .l2 { padding-left: 20px; }
.tree .l2::before { height: 1px; margin-right: 3px; background: #ccc; }
.tree .near { padding-left: 12px; }
.sel strong { font-weight: 700; background: #ddd; line-height: 7px; }
.hbar { display: flex; align-items: center; justify-content: space-between; height: 8px; padding: 0 2px; background: #f0f0f0; }
.hbar .left { border-right-color: #555; }
.hbar .right { border-left-color: #555; }
.hbar b { width: 60px; height: 6px; border: 1px solid #aaa; background: #e2e2e2; }

/* Drawing view */
.view { flex: 1; min-width: 0; display: flex; flex-direction: column; }
.view-main { flex: 1; min-height: 0; display: flex; }
.canvas { position: relative; flex: 1; min-width: 0; background: #fff; border-top: 1px solid #999; border-left: 1px solid #999; }
.model { width: 100%; }
.mdi { position: absolute; top: 3px; right: 1px; display: flex; gap: 1px; }
.mdi svg { width: 6px; height: 6px; }
.navbar { position: absolute; top: 81px; right: 0; width: 14px; border: 1px solid #ccc; border-radius: 2px; background: #f8f8f8; }
.mark { position: absolute; right: 12px; bottom: 0; display: flex; align-items: center; gap: 4px; font-size: 16px; line-height: 22px; color: #fff; text-shadow: 0 0 1px #777, 1px 1px 0 #bbb; white-space: nowrap; }
.mark svg { width: 27px; height: 22px; }
.viewbar { display: flex; align-items: center; height: 9px; padding-left: 9px; background: #f0f0f0; }
.scale { width: 23px; }
.vi { width: 8px; height: 8px; flex: none; }
.vi svg { width: 7px; height: 7px; }
.hbar.flat { flex: 1; margin-left: 6px; }
.hbar.flat b { width: 7px; }

/* Status bar */
.status { display: flex; align-items: center; height: 11px; padding: 0 2px; gap: 3px; }
.status p { width: 273px; font-family: Lato, "Noto Sans CJK SC", sans-serif; white-space: nowrap; }
.status > svg { width: 7px; height: 7px; }
.status .gap { margin-left: 5px; }
.status select { width: 81px; background: #fff; border-color: #ddd; }
.status .pick::after { border-top-color: #999; }
.filters { display: flex; align-items: center; gap: 2px; margin-left: auto; margin-right: 26px; }
```
